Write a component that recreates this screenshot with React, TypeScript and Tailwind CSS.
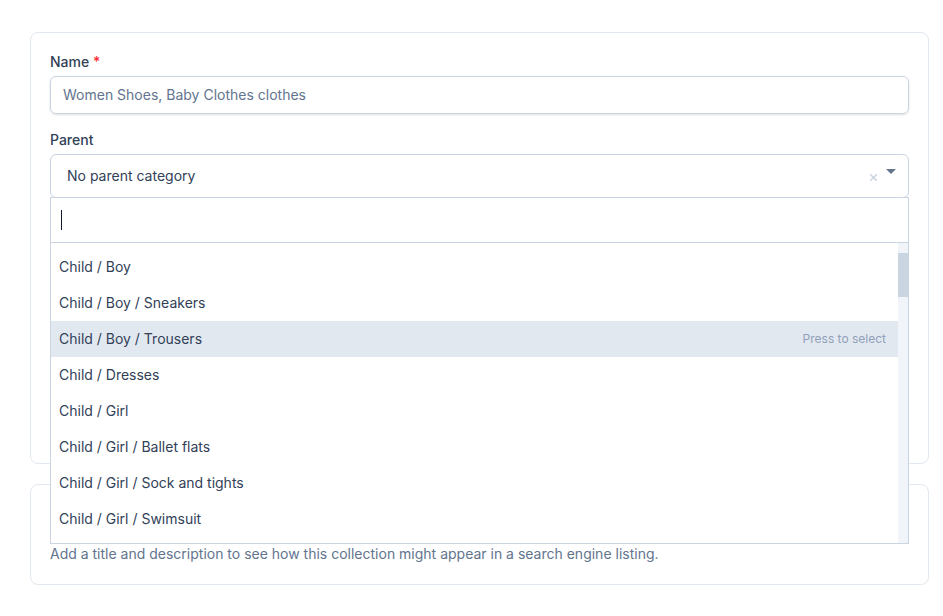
import React from "react";

const items = [
  "Child / Boy",
  "Child / Boy / Sneakers",
  "Child / Boy / Trousers",
  "Child / Dresses",
  "Child / Girl",
  "Child / Girl / Ballet flats",
  "Child / Girl / Sock and tights",
  "Child / Girl / Swimsuit",
];

export default function App() {
  return (
    <div
      className="min-h-[616px] bg-white pl-[30px] pr-[14px] pt-[32px] text-slate-700"
      style={{ fontFamily: "Inter, 'Noto Sans', sans-serif" }}
    >
      <div className="flex w-[899px] flex-col gap-[20px]">
        {/* Card 1 */}
        <div className="relative h-[432px] rounded-lg border border-slate-200 bg-white px-[19px] pt-[19px]">
          <label className="block text-sm font-medium leading-5 text-slate-700">
            Name <span className="text-red-500">*</span>
          </label>
          <div className="mt-1 flex h-[38px] items-center rounded-md border border-slate-300 px-3 text-sm text-slate-500 shadow-sm">
            Women Shoes, Baby Clothes clothes
          </div>
          <label className="mt-4 block text-sm font-medium leading-5 text-slate-700">
            Parent
          </label>
          <div className="relative mt-1">
            <div className="flex h-[44px] items-center rounded-md border border-slate-300 pl-4 pr-3 text-sm text-slate-700">
              <span className="flex-1">No parent category</span>
              <svg width="11" height="11" viewBox="0 0 10 10" className="mr-[7px] mt-[2px]">
                <path d="M2 2 L8 8 M8 2 L2 8" stroke="#cbd5e1" strokeWidth="1.4" />
              </svg>
              <svg width="10" height="6" viewBox="0 0 10 6" className="mb-[8px]">
                <path d="M0 0 H10 L5 5 Z" fill="#64748b" />
              </svg>
            </div>
            {/* Dropdown */}
            <div className="absolute left-0 top-[43px] z-10 w-[859px] bg-white">
              <div className="flex h-[46px] items-center border border-slate-300 pl-[10px]">
                <div className="h-[20px] w-px bg-slate-900" />
              </div>
              <div className="flex h-[301px] border-x border-b border-slate-300 bg-white">
                <div className="flex-1 overflow-hidden pt-[6px]">
                  {items.map((it, i) => (
                    <div
                      key={it}
                      className={
                        "flex h-[36px] items-center justify-between pl-2 pr-3 text-sm " +
                        (i === 2 ? "bg-slate-200" : "")
                      }
                    >
                      <span>{it}</span>
                      {i === 2 && <span className="text-xs text-slate-400">Press to select</span>}
                    </div>
                  ))}
                </div>
                <div className="w-[10px] bg-slate-100 pt-[10px]">
                  <div className="h-[44px] bg-slate-300" />
                </div>
              </div>
            </div>
          </div>
        </div>
        {/* Card 2 */}
        <div className="h-[101px] rounded-lg border border-slate-200 bg-white px-[19px] pt-[59px]">
          <p className="text-sm leading-5 text-slate-500">
            Add a title and description to see how this collection might appear in a search engine listing.
          </p>
        </div>
      </div>
    </div>
  );
}
